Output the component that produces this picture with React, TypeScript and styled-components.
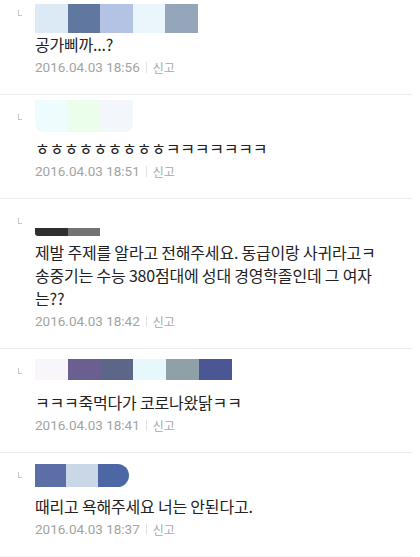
import styled, { createGlobalStyle } from "styled-components";

const GlobalStyle = createGlobalStyle`
  html, body {
    margin: 0;
    padding: 0;
    background: #fff;
  }
  body {
    font-family: "Noto Sans CJK KR", "Noto Sans", sans-serif;
    overflow: hidden;
  }
`;

const List = styled.div`
  width: 412px;
  margin-top: -10px;
`;

const Item = styled.div`
  padding: 0 0 18px 35px;
  border-top: 1px solid #ececec;
  border-bottom: 1px solid #f4f4f4;
  margin-top: -1px;
`;

const NameRow = styled.div`
  position: relative;
  height: 26px;
  margin-top: 10px;
`;

const ReplyMark = styled.span`
  position: absolute;
  left: -17px;
  top: 9px;
  width: 3px;
  height: 5px;
  border-left: 1.5px solid #c4c4c4;
  border-bottom: 1.5px solid #c4c4c4;
`;

const NameBar = styled.div<{ $top: number; $h: number; $round?: string }>`
  display: flex;
  position: relative;
  top: ${(p) => p.$top}px;
  height: ${(p) => p.$h}px;
  width: fit-content;
  overflow: hidden;
  border-radius: ${(p) => p.$round || "0"};
`;

const Cell = styled.span<{ $bg: string; $w: number }>`
  width: ${(p) => p.$w}px;
  height: 100%;
  background: ${(p) => p.$bg};
`;

const Body = styled.p`
  margin: 6px 0 0;
  max-width: 354px;
  font-size: 16px;
  line-height: 23px;
  letter-spacing: -0.2px;
  color: #222;
`;

const Meta = styled.div`
  display: flex;
  align-items: center;
  margin-top: 2px;
  height: 18px;
  color: #a3a3a3;
`;

const DateText = styled.span`
  font-family: Roboto, "Noto Sans CJK KR", sans-serif;
  font-size: 13.5px;
`;

const Bar = styled.span`
  width: 1px;
  height: 11px;
  background: #e2e2e2;
  margin: 0 6px;
`;

const Report = styled.span`
  font-size: 12px;
  color: #a8a8a8;
`;

type Comment = {
  cells: string[];
  top: number;
  h: number;
  w?: number;
  round?: string;
  text: string;
  date: string;
};

const comments: Comment[] = [
  {
    cells: ["#dbeaf4", "#60789f", "#b4c2e4", "#eaf6fc", "#95a5ba"],
    top: 3,
    h: 29,
    text: "공가삐까...?",
    date: "2016.04.03 18:56",
  },
  {
    cells: ["#effcfd", "#ebfdeb", "#f3f6fb"],
    top: -5,
    h: 32,
    round: "0 0 8px 8px",
    text: "ㅎㅎㅎㅎㅎㅎㅎㅎㅎㅋㅋㅋㅋㅋㅋㅋ",
    date: "2016.04.03 18:51",
  },
  {
    cells: ["#2f2f2f", "#737373"],
    top: 19,
    h: 8,
    round: "0 0 0 3px",
    text: "제발 주제를 알라고 전해주세요. 동급이랑 사귀라고ㅋ 송중기는 수능 380점대에 성대 경영학졸인데 그 여자는??",
    date: "2016.04.03 18:42",
  },
  {
    cells: ["#f8f6fb", "#6b5f91", "#5c6688", "#e6f8fb", "#8fa1a6", "#4b5694"],
    top: 0,
    h: 21,
    w: 32.8,
    text: "ㅋㅋㅋ죽먹다가 코로나왔닭ㅋㅋ",
    date: "2016.04.03 18:41",
  },
  {
    cells: ["#5b6ea6", "#cad7e6", "#4d67a5"],
    top: 1,
    h: 23,
    w: 31.4,
    round: "0 12px 12px 0",
    text: "때리고 욕해주세요 너는 안된다고.",
    date: "2016.04.03 18:37",
  },
];

const App = () => {
  return (
    <>
      <GlobalStyle />
      <List>
        {comments.map((c) => (
          <Item key={c.date}>
            <NameRow>
              <ReplyMark />
              <NameBar $top={c.top} $h={c.h} $round={c.round}>
                {c.cells.map((bg, i) => (
                  <Cell key={i} $bg={bg} $w={c.w || 32.5} />
                ))}
              </NameBar>
            </NameRow>
            <Body>{c.text}</Body>
            <Meta>
              <DateText>{c.date}</DateText>
              <Bar />
              <Report>신고</Report>
            </Meta>
          </Item>
        ))}
      </List>
    </>
  );
};

export default App;
